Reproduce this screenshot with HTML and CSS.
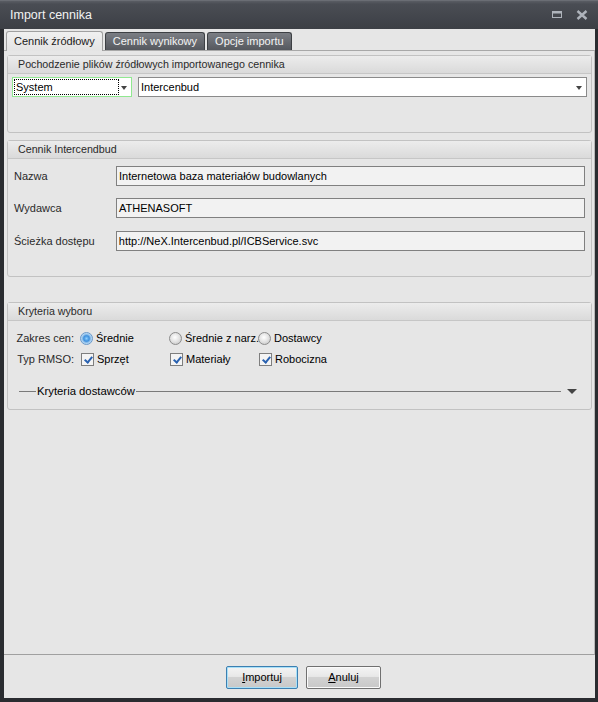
FILE: index.html
```html
<!DOCTYPE html>
<html lang="pl">
<head>
<meta charset="utf-8">
<title>Import cennika</title>
<link rel="stylesheet" href="styles.css">
</head>
<body>
<div class="window">
  <div class="titlebar">
    <span class="title">Import cennika</span>
    <div class="wbtns">
      <svg class="wbtn" width="12" height="10" viewBox="0 0 12 10"><rect x="1.5" y="1.5" width="9" height="6" fill="none" stroke="#aeb3bb" stroke-width="1"/><rect x="1" y="1" width="10" height="2.5" fill="#aeb3bb"/></svg>
      <svg class="wbtn" width="12" height="10" viewBox="0 0 12 10"><path d="M1.5 1 L10.5 9 M10.5 1 L1.5 9" stroke="#aeb3bb" stroke-width="2.4"/></svg>
    </div>
  </div>
  <div class="client">
    <div class="tabs">
      <div class="tab active">Cennik źródłowy</div>
      <div class="tab">Cennik wynikowy</div>
      <div class="tab">Opcje importu</div>
    </div>
    <div class="page">
      <div class="group g1">
        <div class="ghead">Pochodzenie plików źródłowych importowanego cennika</div>
        <div class="gbody combos">
          <div class="combo focus"><span class="focusrect">System</span><span class="arrow"></span></div>
          <div class="combo wide"><span class="ctext">Intercenbud</span><span class="arrow"></span></div>
        </div>
      </div>
      <div class="group g2">
        <div class="ghead">Cennik Intercendbud</div>
        <div class="gbody fields">
          <div class="frow"><span class="flabel">Nazwa</span><div class="tbox">Internetowa baza materiałów budowlanych</div></div>
          <div class="frow"><span class="flabel">Wydawca</span><div class="tbox">ATHENASOFT</div></div>
          <div class="frow"><span class="flabel">Ścieżka dostępu</span><div class="tbox w2">http://NeX.Intercenbud.pl/ICBService.svc</div></div>
        </div>
      </div>
      <div class="group g3">
        <div class="ghead">Kryteria wyboru</div>
        <div class="gbody crit">
          <div class="crow">
            <span class="clabel">Zakres cen:</span>
            <label class="opt"><span class="radio on"></span>Średnie</label>
            <label class="opt"><span class="radio"></span>Średnie z narz.</label>
            <label class="opt"><span class="radio"></span>Dostawcy</label>
          </div>
          <div class="crow">
            <span class="clabel">Typ RMSO:</span>
            <label class="opt"><span class="check"></span>Sprzęt</label>
            <label class="opt"><span class="check"></span>Materiały</label>
            <label class="opt"><span class="check"></span>Robocizna</label>
          </div>
          <div class="suppliers">
            <span class="sline short"></span><span class="stext">Kryteria dostawców</span><span class="sline long"></span><span class="sarrow"></span>
          </div>
        </div>
      </div>
    </div>
    <div class="footer">
      <button class="btn default"><u>I</u>mportuj</button>
      <button class="btn"><u>A</u>nuluj</button>
    </div>
  </div>
</div>
</body>
</html>
```
FILE: styles.css
```css
* { box-sizing: border-box; }
html, body { margin: 0; padding: 0; }
body {
  width: 598px; height: 702px; overflow: hidden;
  background: #2a2c30;
  font-family: "Liberation Sans", Arial, sans-serif;
  font-size: 11px;
  color: #000;
}
.window { display: flex; flex-direction: column; height: 702px; }
.titlebar {
  height: 29px; flex: none;
  background: linear-gradient(#5a5d64 0px, #4a4d54 3px, #3c3f45 100%);
  border-top: 1px solid #6a6d74;
  display: flex; align-items: center; justify-content: space-between;
  padding: 0 10px 0 10px;
}
.title { color: #f2f2f2; font-size: 12.5px; }
.wbtns { display: flex; gap: 13px; align-items: center; }
.wbtn { display: block; }
.client {
  flex: 1; margin: 0 3px 4px 4px;
  background: #e6e6e6;
  display: flex; flex-direction: column;
}
.tabs { display: flex; gap: 2px; padding: 2px 0 0 2px; height: 21px; flex: none; align-items: flex-end; }
.tab {
  height: 18px; padding: 0 7px;
  background: linear-gradient(#7b7e84, #55585e);
  border: 1px solid #3d4044; border-bottom: none;
  border-radius: 3px 3px 0 0;
  color: #f4f4f4; font-size: 11px; line-height: 17px;
}
.tab.active {
  height: 20px; background: linear-gradient(#f0f0f0, #e4e4e4);
  border-color: #a0a0a0; color: #202020; line-height: 19px;
  position: relative; top: 1px; padding: 0 7px;
}
.page {
  flex: 1; border-top: 1px solid #a8a8a8; border-bottom: 1px solid #a0a0a0;
  border-right: 1px solid #b8b8b8;
  padding: 4px 2px 0 3px;
  display: flex; flex-direction: column;
}
.group {
  border: 1px solid #c2c2c2; border-radius: 3px;
}
.ghead {
  height: 18px; line-height: 17px;
  background: linear-gradient(#ececec, #dadada);
  border-bottom: 1px solid #c6c6c6;
  padding-left: 10px; color: #2a2a2a; font-size: 10.7px;
}
.g1 { height: 78px; }
.g2 { height: 137px; margin-top: 7px; }
.g3 { height: 108px; margin-top: 25px; }
.combos { display: flex; gap: 6px; padding: 3px 4px 0 4px; }
.combo {
  height: 20px; border: 1px solid #8a8a8a; background: #fff;
  display: flex; align-items: center; position: relative;
}
.combo.focus { width: 120px; border-color: #90e890; padding: 1px; }
.combo.wide { flex: 1; }
.focusrect {
  width: 105px; height: 16px; border: 1px dotted #000; line-height: 14px;
  padding-left: 1px;
}
.ctext { padding-left: 2px; }
.arrow {
  position: absolute; right: 4px; top: 8px;
  width: 0; height: 0;
  border-left: 3.5px solid transparent; border-right: 3.5px solid transparent; border-top: 4px solid #444;
}
.fields { padding: 7px 6px 0 6px; display: flex; flex-direction: column; gap: 12px; }
.frow { display: flex; align-items: center; height: 20px; }
.flabel { width: 102px; color: #2a2a2a; }
.tbox {
  width: 469px; height: 20px; border: 1px solid #808080; background: #f2f2f2;
  line-height: 18px; padding-left: 2px;
}
.tbox.w2 { width: 470px; }
.frow:nth-child(3) { margin-top: 1px; }
.crit { padding: 9px 6px 0 6px; }
.crow { display: flex; align-items: center; height: 16px; margin-bottom: 5px; }
.clabel { width: 60px; margin-right: 6px; color: #2a2a2a; text-align: right; }
.opt { width: 89px; flex: none; display: flex; align-items: center; gap: 3px; white-space: nowrap; }
.radio {
  width: 13px; height: 13px; border-radius: 50%;
  border: 1px solid #8c8c8c;
  background: radial-gradient(circle at 45% 40%, #ffffff 0%, #e2e2e2 50%, #bcbcbc 100%);
  flex: none;
}
.radio.on {
  border-color: #6a98c8;
  background: radial-gradient(circle at 50% 50%, #8fd0ff 0%, #3d8fdc 35%, #a8cff0 60%, #e8f2fb 100%);
}
.check {
  width: 13px; height: 13px; border: 1px solid #7e7e7e; background: #f4f4f4; flex: none;
  position: relative; margin-left: 1px;
}
.check::after {
  content: ""; position: absolute; left: 3.5px; top: 1px;
  width: 3px; height: 6px;
  border-right: 2px solid #2a62b0; border-bottom: 2px solid #2a62b0;
  transform: rotate(40deg);
}
.suppliers { display: flex; align-items: center; margin-top: 17px; margin-left: 5px; height: 14px; }
.sline { height: 1px; background: #7a7a7a; }
.sline.short { width: 17px; }
.sline.long { width: 425px; }
.stext { padding: 0 1px; color: #000; font-size: 11.3px; }
.sarrow {
  width: 0; height: 0; margin-left: 6px;
  border-left: 5px solid transparent; border-right: 5px solid transparent; border-top: 5px solid #444;
}
.footer {
  height: 43px; flex: none;
  display: flex; justify-content: center; align-items: center; gap: 8px;
  padding-left: 8px; padding-top: 1px;
}
.btn {
  height: 23px; font-family: inherit; font-size: 11px; color: #000;
  border: 1px solid #707070; border-radius: 2px;
  background: linear-gradient(#f4f4f4 0%, #e8e8e8 45%, #d2d2d2 50%, #c8c8c8 100%);
  box-shadow: inset 0 0 0 1px #fafafa;
  padding: 0;
}
.btn.default { width: 72px; border-color: #3c7fb1; box-shadow: inset 0 0 0 1px #a8e0f8; }
.btn:not(.default) { width: 75px; }
```
